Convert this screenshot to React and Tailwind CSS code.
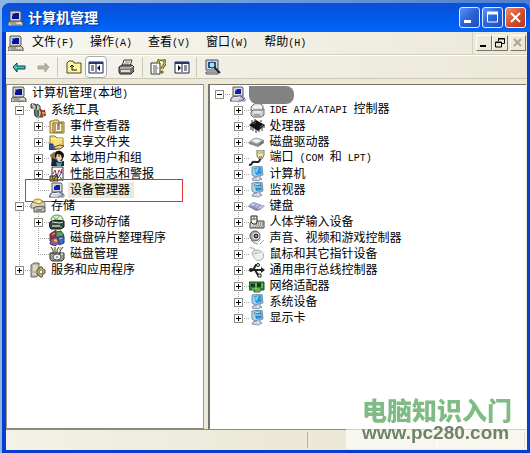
import { useState } from 'react'

const shapes = {
  computer: (
    <>
      <path d="M2 11h11l2 2v3H0v-3z" fill="#c9c6bd" stroke="#4b4b4b" />
      <path d="M2 1h10l1 1v8l-1 1H2z" fill="#d6d3ca" stroke="#555" />
      <path d="M4 3h7v6H4z" fill="#06129b" />
      <path d="M4 3h3v1H5v2H4z" fill="#4d79ed" />
      <path d="M2 13h6M3 15h10" stroke="#77746d" />
      <path d="M10 13h3" stroke="#faf9f1" />
    </>
  ),
  device: (
    <>
      <path d="M3 1h9l1 1v8H3z" fill="#dedcd2" stroke="#555" />
      <path d="M5 3h6v5H5z" fill="#0720bd" />
      <path d="M5 3h2v1H6v1H5z" fill="#79a8ff" />
      <path d="m2 11 9-1 3 3-3 2H0z" fill="#c2c6d0" stroke="#4f5362" />
      <path d="m3 12 7-1M2 14h7" stroke="#fff" />
      <path d="m12 9 3 4v2h-3" fill="none" stroke="#6579a5" />
    </>
  ),
  tools: (
    <>
      <path d="M1 2h4l2 3 1 9H5L4 6H1z" fill="#91979b" stroke="#333" />
      <path d="m2 2 2 2v4" stroke="#f5f6f7" fill="none" />
      <path d="m7 2 3 2v4l3 1v6H6V8z" fill="#c5c3b9" stroke="#39443f" />
      <path d="m10 7 2 3-1 5M14 8l1 6" stroke="#a22a1e" strokeWidth="2" />
      <path d="M8 8v6" stroke="#38744f" strokeWidth="2" />
      <path d="M12 10h3v2h-3z" fill="#e39427" />
    </>
  ),
  events: (
    <>
      <path d="M1 3h3l1-1h4l1 2h5v11H1z" fill="#f4df7d" stroke="#877326" />
      <path d="M4 5h9v9H4z" fill="#fffce0" stroke="#705c1d" />
      <path d="M6 6v7M10 5v3" stroke="#9d211b" />
      <path d="M8 7h2M8 9h3M8 11h3" stroke="#333" />
    </>
  ),
  share: (
    <>
      <path d="M1 2h5l2 2h6v9H1z" fill="#f9df70" stroke="#91792f" />
      <path d="M2 5h12" stroke="#fff7bc" />
      <path d="M0 10h4v3h3v3H0z" fill="#2552ad" stroke="#23375f" />
      <path d="m5 13 6-2 4 1-4 3H5z" fill="#eed0a0" stroke="#644b29" />
    </>
  ),
  users: (
    <>
      <path d="m1 5 4-3 4 2-1 6-5 1z" fill="#8d6f44" />
      <path d="M6 3c2-4 9-2 9 3l-2 5-4-1-3-3z" fill="#111" />
      <path d="m8 4 4 1 1 4-3 2-3-3z" fill="#f6d9b2" />
      <path d="m3 8 5 2 2 2 5-1v5H2z" fill="#182537" />
      <path d="m7 12 3 1 3-1-1 4H8z" fill="#4b9ab2" />
      <path d="M9 6h2" stroke="#222" />
    </>
  ),
  logs: (
    <>
      <path d="M3 1h11v13H3z" fill="#fff" stroke="#333" />
      <path d="m4 8 2-4 2 7 2-7 2 3 1-4" stroke="#c12323" fill="none" />
      <path d="m3 12 4-4 2 4 4-6" stroke="#1a369c" fill="none" />
      <path d="M1 10h7l1 5H1z" fill="#caa348" stroke="#46361c" />
      <path d="m3 10 2 5m2-5-3 5m7-4 3 4" stroke="#3a3a3a" />
    </>
  ),
  storage: (
    <>
      <path d="m1 6 3-3h9l2 3v4H1z" fill="#dcd7b8" stroke="#6b6658" />
      <path d="M3 4c1-4 8-4 10 0L9 6z" fill="#efdd76" stroke="#968743" />
      <path d="M7 3h3l-1 2z" fill="#fff" />
      <path d="m5 9 8-1 2 2v4H4v-4z" fill="#c1c4be" stroke="#55534e" />
      <path d="M6 12h6" stroke="#4c5150" />
      <path d="M12 10h2" stroke="#3f9a40" />
    </>
  ),
  removable: (
    <>
      <ellipse cx="8" cy="5" rx="6" ry="4" fill="#d9ead5" stroke="#5e8f5e" />
      <path d="m8 5 3-4M8 5 3 3" stroke="#6bd365" />
      <path d="m1 8 5-2 9 1v6l-3 2H2l-2-3z" fill="#39463f" stroke="#101713" />
      <path d="m3 8 8 1 3-1" stroke="#dce7db" fill="none" />
      <path d="M3 12h8" stroke="#a3aca4" strokeWidth="2" />
      <path d="M11 13h2" stroke="#49d94b" />
    </>
  ),
  defrag: (
    <>
      <path d="m1 4 6-4v8l-6 3z" fill="#a12e32" stroke="#56363d" />
      <path d="m7 2 5-1 3 4-4 4-4-2z" fill="#56a44e" stroke="#315837" />
      <path d="m9 7 6-1v7l-5 2z" fill="#3b6cc7" stroke="#273c7a" />
      <path d="m2 9 6-2 2 6-4 3-5-2z" fill="#9a52a2" stroke="#4a3b61" />
      <path d="m3 5 3-2M10 9l3-1" stroke="#f4b6ac" />
      <path d="m5 10 3 1" stroke="#f0c63d" strokeWidth="2" />
    </>
  ),
  disk: (
    <>
      <path d="M1 7h14v6l-2 2H3l-2-2z" fill="#9da09d" stroke="#333" />
      <path d="M2 1l2 3v4M6 1v6M10 1l-2 3v3M14 1l-3 4v3" stroke="#333" fill="none" />
      <path d="m5 2 1 3m6-4-2 3" stroke="#b9a752" />
      <ellipse cx="8" cy="11" rx="4" ry="3" fill="#f1f1ee" stroke="#555" />
      <path d="M7 11h2" stroke="#555" />
      <path d="M12 8h2" stroke="#fff" />
    </>
  ),
  services: (
    <>
      <path d="m1 3 3-2h5v12l-3 2H1z" fill="#bcb9a6" stroke="#69675b" />
      <path d="M3 4h5M3 6h4M3 8h4M2 12h4" stroke="#f3f1dd" />
      <path d="M10 5h2l1 2 2 1v3l-2 1-1 3h-2l-1-2-2-1V8l2-1z" fill="#d3bd7a" stroke="#504936" />
      <circle cx="11" cy="10" r="2" fill="#fff" stroke="#6b613d" />
    </>
  ),
  ide: (
    <>
      <path d="m2 5 3-3h7l2 2v4l-2 1H2z" fill="#e2e2df" stroke="#6b6b68" />
      <path d="M4 5h7l2-1M5 3h6" stroke="#fff" fill="none" />
      <path d="M4 8h9l2-1v6l-3 2H4l-2-2v-3z" fill="#cfd1cf" stroke="#626663" />
      <path d="M5 10h7" stroke="#fff" />
      <path d="M5 13h6" stroke="#787b78" />
    </>
  ),
  chip: (
    <>
      <path d="m0 7 7-5 9 5-7 6z" fill="#111" />
      <path d="M2 8v4m2-3v4m3-2v4m3-4v3m3-5v4m2-6v3M3 5V2m3 1V1m6 3V2" stroke="#303030" />
      <path d="m4 6 3-2M11 9l3-2" stroke="#777" />
    </>
  ),
  drive: (
    <>
      <path d="m0 8 6-4 9 2v3l-6 4-9-3z" fill="#888b8b" />
      <path d="m1 7 6-3 7 2-6 4z" fill="#e6e7e5" stroke="#a1a3a2" />
      <path d="m5 7 3-1 3 1-3 1z" fill="#fff" />
      <path d="M10 11l4-3" stroke="#555" />
    </>
  ),
  port: (
    <>
      <path d="M8 0h7v5l-2 4h-3L8 6z" fill="#eee8b8" stroke="#777447" />
      <path d="M10 1v3m2-3v3m2-3v3" stroke="#aaa368" />
      <path d="M11 9c0 5-5 2-7 3s0 3-4 3" fill="none" stroke="#222" strokeWidth="2" />
      <path d="M10 7h3" stroke="#555" />
    </>
  ),
  monitor: (
    <>
      <path d="m3 1 10-1 1 9-8 2-3-2z" fill="#9dcde8" stroke="#7794a8" />
      <path d="m5 2 7-1 1 7-6 1z" fill="#2b98e3" />
      <path d="m6 3 4-1-3 5z" fill="#87d2fa" />
      <path d="M8 10h3v2l2 1-4 2-6-1 1-2 4-1z" fill="#ced9e4" stroke="#8493ab" />
    </>
  ),
  display: (
    <>
      <path d="m3 1 10-1 1 9-8 2-3-2z" fill="#b9d5e3" stroke="#74899a" />
      <path d="m5 2 7-1 1 7-6 1z" fill="#268bce" />
      <path d="M6 5h6M6 3l5-1" stroke="#bbecff" />
      <path d="M8 10h3v2l2 1-4 2-6-1 1-2 4-1z" fill="#d5dde4" stroke="#8493ab" />
    </>
  ),
  keyboard: (
    <>
      <path d="m0 7 4-3 12 4-5 4-4 1-7-4z" fill="#8388b2" />
      <path d="m1 7 3-2 11 3-4 3z" fill="#e9eaf7" stroke="#abaed1" />
      <path d="m3 7 8 3m-6-4 8 3M5 9l3-3m0 4 3-3" stroke="#989bc5" />
    </>
  ),
  hid: (
    <>
      <path d="M5 7h10v7H1V9z" fill="#d4d4cd" stroke="#444" />
      <path d="M7 9h7M7 11h7M4 13h9" stroke="#555" strokeDasharray="1 1" />
      <path d="M2 2h6v6l-1 2H4L2 8z" fill="#f4f4ed" stroke="#222" />
      <path d="M5 2v4M2 5h6" stroke="#666" />
    </>
  ),
  sound: (
    <>
      <circle cx="6" cy="6" r="5" fill="#a8abae" stroke="#555" />
      <circle cx="7" cy="6" r="3" fill="#34383b" stroke="#eee" />
      <circle cx="7" cy="6" r="1" fill="#aaa" />
      <path d="m9 12 3-3m-1 5 4-4" stroke="#95a1cc" />
      <path d="m2 10 3 3 4 1" stroke="#8b8f94" fill="none" />
    </>
  ),
  mouse: (
    <>
      <path d="m4 5 4-1c5 0 8 4 6 8-2 4-8 3-9-1L3 8z" fill="#efeff0" stroke="#acadb0" />
      <path d="M8 4 6 8l-3-1m3 1 6-2" fill="none" stroke="#bdbec0" />
      <path d="M6 4C5 1 2 3 1 1" fill="none" stroke="#939699" />
    </>
  ),
  usb: (
    <>
      <path d="M1 8h12M4 8l3-5h2M6 8l3 5h1" fill="none" stroke="#222" strokeWidth="2" />
      <circle cx="2" cy="8" r="2" fill="#222" />
      <path d="m12 5 4 3-4 3z" fill="#222" />
      <circle cx="9" cy="3" r="1.5" fill="#fff" stroke="#222" />
      <path d="M9 12h3v3H9z" fill="#fff" stroke="#222" />
    </>
  ),
  network: (
    <>
      <path d="M0 4h15v8h-4v2H5v-2H0z" fill="#278a34" stroke="#185b22" />
      <path d="M2 6h4v3H2zM8 5h4v4H8z" fill="#123d17" />
      <path d="M3 11h8M7 5v6M13 5v5" stroke="#a7d785" />
      <path d="M6 13h5" stroke="#d8bb49" />
    </>
  ),
  back: <path d="M2 8l4-4v3h8v3H6v3z" fill="#38c9bd" stroke="#143d3a" />,
  forward: <path d="M14 8l-4-4v3H3v3h7v3z" fill="#b5b3a9" stroke="#a5a399" />,
  up: (
    <>
      <path d="M1 4l2-2h4l1 2h7v10H1z" fill="#fff8a0" stroke="#514915" />
      <path d="M6 6v5h5M4 8l2-2 2 2" fill="none" stroke="#111" />
    </>
  ),
  treePane: (
    <>
      <path d="M1 3h14v11H1z" fill="#fff" stroke="#17205a" />
      <path d="M1 3h14v2H1z" fill="#27336f" />
      <path d="M8 5v8" stroke="#17205a" />
      <path d="M3 7h3M3 9h3M3 11h3" stroke="#222" />
      <path d="m12 6-3 3 3 3z" fill="#111" />
    </>
  ),
  actionPane: (
    <>
      <path d="M1 3h14v11H1z" fill="#fff" stroke="#17205a" />
      <path d="M1 3h14v2H1z" fill="#27336f" />
      <path d="M8 5v8" stroke="#17205a" />
      <path d="M10 7h3M10 9h3M10 11h3" stroke="#222" />
      <path d="m4 6 3 3-3 3z" fill="#111" />
    </>
  ),
  print: (
    <>
      <path d="m4 7 2-6h8l-2 6z" fill="#fff" stroke="#333" />
      <path d="M7 3h5M6 5h5" stroke="#777" />
      <path d="m1 8 3-2h10l2 2v4l-3 3H2l-1-2z" fill="#77766f" stroke="#222" />
      <path d="M2 9h10l3-2" fill="none" stroke="#e3e1d5" />
      <path d="M3 12h9" stroke="#ddd" strokeWidth="2" />
    </>
  ),
  properties: (
    <>
      <path d="M1 4h9v11H1z" fill="#fff" stroke="#333" />
      <path d="M3 7h4M3 9h5M3 11h4M3 13h4" stroke="#555" />
      <path d="M8 4c0-5 7-5 7 0 0 3-3 3-3 6" fill="none" stroke="#655e14" strokeWidth="3" />
      <path d="M8 4c0-5 7-5 7 0 0 3-3 3-3 6" fill="none" stroke="#f4e751" />
      <path d="M11 12h2v2h-2z" fill="#eedc38" stroke="#655e14" />
    </>
  ),
  scan: (
    <>
      <path d="M1 1h12v10H1z" fill="#d4d7d8" stroke="#43536a" />
      <path d="M3 3h8v6H3z" fill="#1c4fb2" />
      <path d="M1 13h12v2H1z" fill="#d8d8d2" stroke="#535861" />
      <circle cx="7" cy="6" r="3" fill="#9fe3ec" stroke="#173f55" />
      <path d="m9 8 6 6" stroke="#16224b" strokeWidth="2" />
    </>
  ),
}

function Icon({ name }) {
  return (
    <svg viewBox="0 0 16 16" className="size-4 shrink-0" fill="none" aria-hidden="true">
      {shapes[name]}
    </svg>
  )
}

// Latin glyphs are half as wide as the Chinese ones
function Label({ text }) {
  return text.split(/([\x20-\x7e]+)/).filter(Boolean).map((part, i) => (
    /^[\x20-\x7e]+$/.test(part)
      ? <span key={i} className="font-['Liberation_Mono',monospace] text-[10px]">{part}</span>
      : part
  ))
}

// guides: "|" passes through, "+" branches, "L" is the last branch, "-" has no vertical line
function Guide({ type }) {
  return (
    <svg viewBox="0 0 19 16" className="h-4 w-[19px] shrink-0" shapeRendering="crispEdges" aria-hidden="true">
      {'|+L'.includes(type) && <path d={type === 'L' ? 'M8.5 0V8' : 'M8.5 0V16'} stroke="#a5a5a5" strokeDasharray="1 1" />}
      {'-+L'.includes(type) && <path d="M8 8.5H19" stroke="#a5a5a5" strokeDasharray="1 1" />}
    </svg>
  )
}

function Expander({ open, guide, label, onClick }) {
  return (
    <button type="button" onClick={onClick} aria-label={label} aria-expanded={open} className="relative h-4 w-[19px] shrink-0">
      <Guide type={guide} />
      <svg viewBox="0 0 19 16" className="absolute inset-0 h-4 w-[19px]" shapeRendering="crispEdges" aria-hidden="true">
        <path d="M4.5 4.5h8v8h-8z" fill="#fff" stroke="#8b8b85" />
        <path d="M6 8.5h5" stroke="#000" />
        {!open && <path d="M8.5 6v5" stroke="#000" />}
      </svg>
    </button>
  )
}

const consoleTree = [
  { text: '计算机管理(本地)', icon: 'computer', guides: '' },
  { text: '系统工具', icon: 'tools', guides: '+', open: true },
  { text: '事件查看器', icon: 'events', guides: '|+', open: false },
  { text: '共享文件夹', icon: 'share', guides: '|+', open: false },
  { text: '本地用户和组', icon: 'users', guides: '|+', open: false },
  { text: '性能日志和警报', icon: 'logs', guides: '|+', open: false },
  { text: '设备管理器', icon: 'device', guides: '|L', selected: true },
  { text: '存储', icon: 'storage', guides: '+', open: true },
  { text: '可移动存储', icon: 'removable', guides: '|+', open: false },
  { text: '磁盘碎片整理程序', icon: 'defrag', guides: '|+' },
  { text: '磁盘管理', icon: 'disk', guides: '|L' },
  { text: '服务和应用程序', icon: 'services', guides: 'L', open: false },
]

const deviceTree = [
  { text: '', icon: 'device', guides: '-', open: true },
  { text: 'IDE ATA/ATAPI 控制器', icon: 'ide', guides: ' +', open: false },
  { text: '处理器', icon: 'chip', guides: ' +', open: false },
  { text: '磁盘驱动器', icon: 'drive', guides: ' +', open: false },
  { text: '端口 (COM 和 LPT)', icon: 'port', guides: ' +', open: false },
  { text: '计算机', icon: 'monitor', guides: ' +', open: false },
  { text: '监视器', icon: 'display', guides: ' +', open: false },
  { text: '键盘', icon: 'keyboard', guides: ' +', open: false },
  { text: '人体学输入设备', icon: 'hid', guides: ' +', open: false },
  { text: '声音、视频和游戏控制器', icon: 'sound', guides: ' +', open: false },
  { text: '鼠标和其它指针设备', icon: 'mouse', guides: ' +', open: false },
  { text: '通用串行总线控制器', icon: 'usb', guides: ' +', open: false },
  { text: '网络适配器', icon: 'network', guides: ' +', open: false },
  { text: '系统设备', icon: 'monitor', guides: ' +', open: false },
  { text: '显示卡', icon: 'display', guides: ' L', open: false },
]

function Tree({ rows }) {
  const [items, setItems] = useState(rows)

  const toggle = (index) => {
    setItems(list => list.map((row, i) => (i === index ? { ...row, open: !row.open } : row)))
  }

  // rows under a closed parent are skipped
  let hiddenBelow = Infinity

  return (
    <ul>
      {items.map((row, i) => {
        const depth = row.guides.length
        if (depth > hiddenBelow) return null
        hiddenBelow = row.open === false ? depth : Infinity
        return (
          <li key={i} className="relative flex h-4 items-center whitespace-nowrap">
            {[...row.guides].map((guide, g) => (
              g === depth - 1 && row.open !== undefined
                ? <Expander key={g} open={row.open} guide={guide} label={row.text || '设备'} onClick={() => toggle(i)} />
                : <Guide key={g} type={guide} />
            ))}
            <Icon name={row.icon} />
            {row.text
              ? (
                <span className={row.selected ? 'ml-[3px] bg-[#ece9d8] pr-1 pl-[2px] leading-4' : 'ml-[5px] leading-4'}>
                  <Label text={row.text} />
                </span>
              )
              : <span className="absolute top-0 left-[38px] z-10 h-[18px] w-[45px] rounded-r-lg rounded-bl-lg bg-[#828282]" />}
            {row.selected && <span className="pointer-events-none absolute -top-[3px] left-[14px] h-[23px] w-[158px] border border-[#e03030]" />}
          </li>
        )
      })}
    </ul>
  )
}

function Separator() {
  return <span className="h-5 w-px bg-[#cbc8b8]" />
}

function ToolButton({ icon, label, pressed }) {
  return (
    <button
      type="button"
      aria-label={label}
      className={pressed
        ? 'flex size-[22px] items-center justify-center rounded-sm border border-[#a7aab2] bg-white'
        : 'flex size-[22px] items-center justify-center'}
    >
      <Icon name={icon} />
    </button>
  )
}

function CaptionButton({ label, close, children }) {
  return (
    <button
      type="button"
      aria-label={label}
      className={close
        ? 'size-[21px] rounded-[3px] border border-white bg-linear-to-br from-[#e98d70] via-[#d4502e] to-[#b43818]'
        : 'size-[21px] rounded-[3px] border border-[#dce9ff] bg-linear-to-br from-[#5f93ef] via-[#2a62d8] to-[#1c4ec0]'}
    >
      <svg viewBox="0 0 19 19" className="size-full" fill="none" stroke="#fff" aria-hidden="true">{children}</svg>
    </button>
  )
}

function ChildButton({ label, children, disabled }) {
  return (
    <button
      type="button"
      aria-label={label}
      disabled={disabled}
      className="size-4 border border-t-white border-r-[#77746a] border-b-[#77746a] border-l-white bg-[#ece9d8]"
    >
      <svg viewBox="0 0 14 14" className="size-full" fill="none" stroke={disabled ? '#aaa69a' : '#000'} aria-hidden="true">{children}</svg>
    </button>
  )
}

export default function App() {
  return (
    <div className="flex min-h-screen flex-col bg-linear-to-r from-[#8db4e6] to-[#4f7fd0] pt-[3px] pl-[2px] font-['Liberation_Sans','Noto_Sans_CJK_SC',sans-serif] text-xs text-black">
      <div className="flex flex-1 flex-col rounded-t-lg bg-[#0a3dcc]">

        <header className="flex h-[29px] items-center rounded-t-lg bg-linear-to-b from-[#0a4fd8] via-[#0058e8] to-[#0465fb] pr-1 pl-[6px]">
          <Icon name="computer" />
          <h1 className="ml-1 flex-1 text-sm leading-5 font-bold text-white [text-shadow:1px_1px_#0a2f8c]">计算机管理</h1>
          <div className="flex gap-[2px]">
            <CaptionButton label="最小化"><path d="M4 13.5h7" strokeWidth="3" /></CaptionButton>
            <CaptionButton label="最大化"><path d="M4.5 5h10v9h-10z" /><path d="M4 5h11" strokeWidth="3" /></CaptionButton>
            <CaptionButton label="关闭" close><path d="m5 5 9 9m0-9-9 9" strokeWidth="2" /></CaptionButton>
          </div>
        </header>

        <div className="mr-[3px] mb-[3px] ml-1 flex flex-1 flex-col bg-[#ece9d8]">
          <div className="flex h-[23px] items-center border-b border-[#d3d0c0] bg-linear-to-r from-[#f7f6f1] to-[#ece9d8] pl-[2px]">
            <Icon name="computer" />
            <nav className="ml-2 flex flex-1 gap-4">
              {['文件(F)', '操作(A)', '查看(V)', '窗口(W)', '帮助(H)'].map(item => (
                <button key={item} type="button" className="leading-4 whitespace-nowrap"><Label text={item} /></button>
              ))}
            </nav>
            <div className="flex h-full items-center border-l border-[#d3d0c0] pr-px pl-[3px]">
              <ChildButton label="最小化子窗口"><path d="M3 10h6" strokeWidth="2" /></ChildButton>
              <ChildButton label="还原子窗口">
                <path d="M5.5 5V2.5h6v5H9M2.5 6h6v5h-6zM5 3h7M2 6.5h7" />
              </ChildButton>
              <span className="w-[2px]" />
              <ChildButton label="关闭子窗口" disabled><path d="m3 3 7 7m0-7-7 7" strokeWidth="2" /></ChildButton>
            </div>
          </div>

          <div className="flex h-6 items-center border-t border-b border-t-white border-b-[#c9c6b6] bg-linear-to-r from-[#f5f4ee] to-[#ece9d8] pl-[2px]">
            <ToolButton icon="back" label="后退" />
            <span className="w-[2px]" />
            <ToolButton icon="forward" label="前进" />
            <span className="w-[3px]" />
            <Separator />
            <span className="w-[5px]" />
            <ToolButton icon="up" label="向上" />
            <ToolButton icon="treePane" label="显示/隐藏控制台树" pressed />
            <span className="w-2" />
            <ToolButton icon="print" label="打印" />
            <span className="w-[5px]" />
            <Separator />
            <span className="w-1" />
            <ToolButton icon="properties" label="属性" />
            <span className="w-[2px]" />
            <ToolButton icon="actionPane" label="操作窗格" />
            <span className="w-[3px]" />
            <Separator />
            <span className="w-[5px]" />
            <ToolButton icon="scan" label="扫描检测硬件改动" />
          </div>

          <main className="mt-[5px] flex flex-1 gap-1 pr-px">
            <section className="w-[38%] shrink-0 border border-t-[#8d8a7d] border-r-[#9d9a8d] border-b-[#8d8a7d] border-l-[#9d9a8d] bg-white pt-px pl-1">
              <Tree rows={consoleTree} />
            </section>
            <section className="min-w-0 flex-1 border-t border-l-2 border-t-[#77746a] border-l-[#77746a] bg-white pt-px pl-px">
              <Tree rows={deviceTree} />
            </section>
          </main>

          <footer className="flex h-[21px] items-stretch border-t border-[#8d8a7d] bg-linear-to-r from-[#f3f2e6] via-[#ece9d8] to-[#ece9d8] py-[2px]">
            <span className="w-[58%] border-r border-[#b5b2a2]" />
            <span className="w-1/4 border-r border-white" />
            <span className="mr-[2px] flex-1 border-r border-[#b5b2a2]" />
          </footer>
        </div>
      </div>

      <div className="fixed right-[3px] bottom-1 flex w-[181px] flex-col items-start bg-white/60 pb-1 pl-4 font-bold whitespace-nowrap">
        <span className="text-[25px] leading-5 font-black text-[#7fbb84]">电脑知识入门</span>
        <a href="#" className="text-[19px] leading-6 text-[#718367]">www.pc280.com</a>
      </div>
    </div>
  )
}
